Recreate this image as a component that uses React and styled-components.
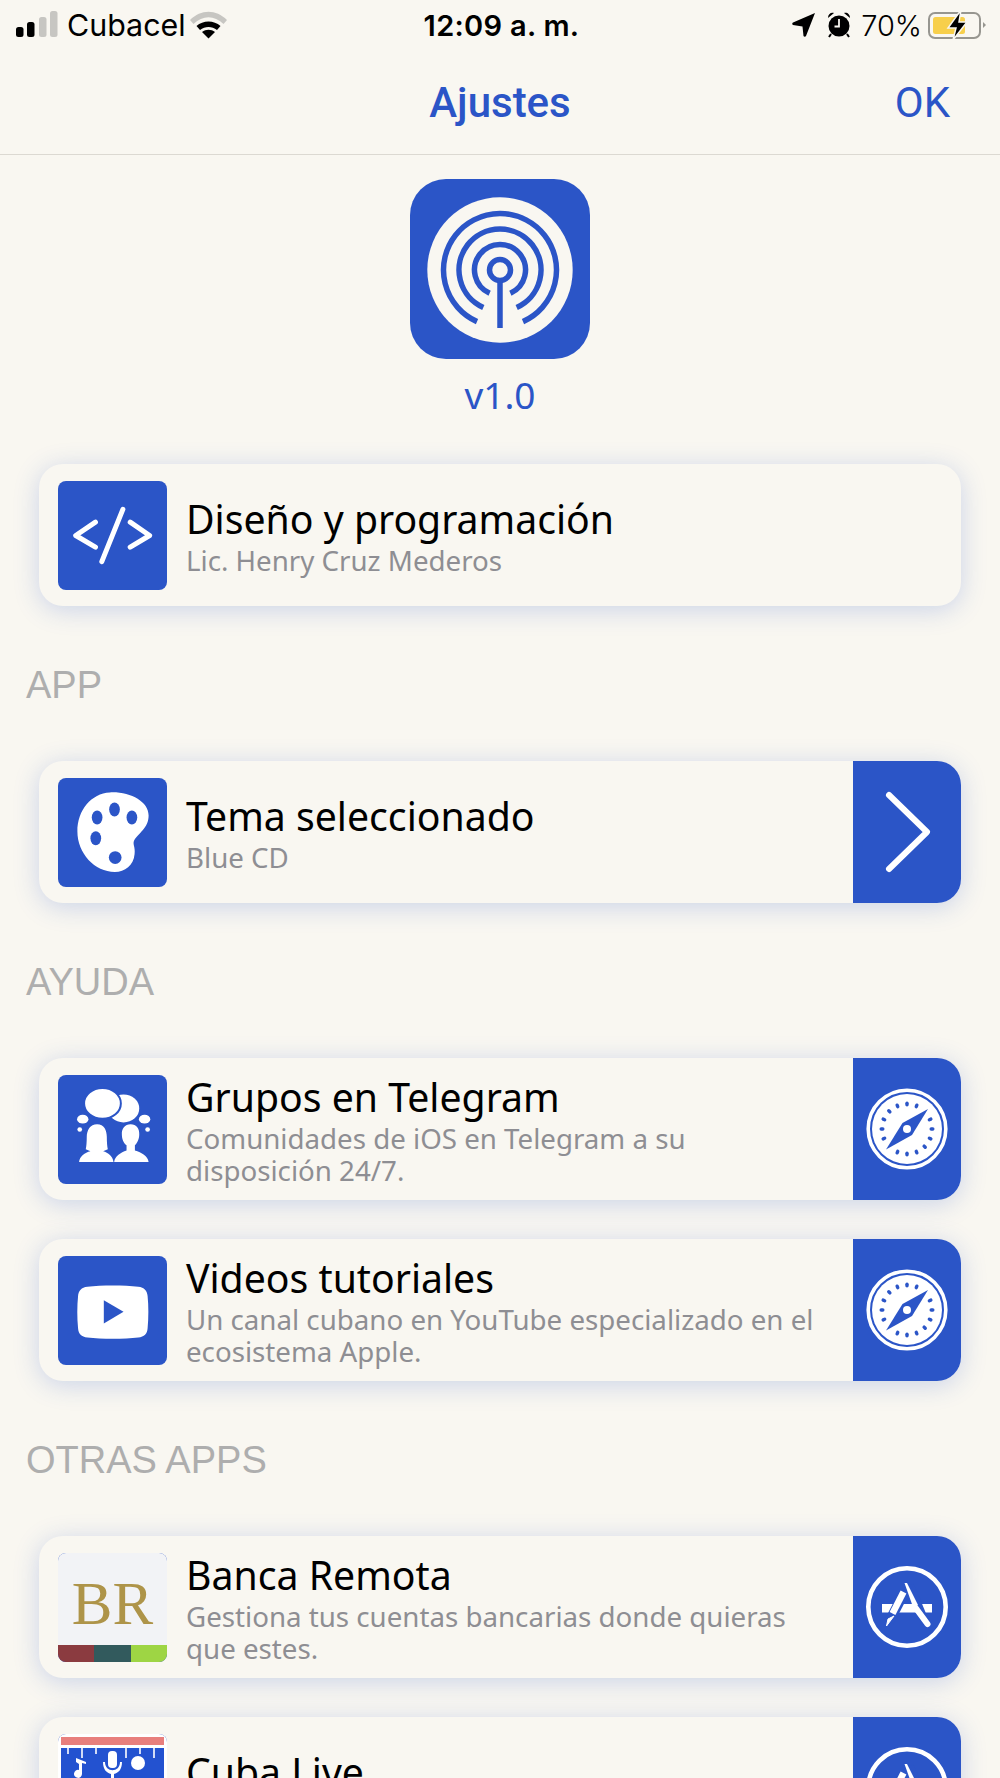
import React from 'react';
import styled, { createGlobalStyle } from 'styled-components';

const BLUE = '#2b55c7';
const BG = '#f9f7f1';

const Global = createGlobalStyle`
  html, body { margin: 0; padding: 0; background: ${BG}; }
  * { box-sizing: border-box; }
`;

const Page = styled.div`
  width: 1000px;
  height: 1778px;
  overflow: hidden;
  background: ${BG};
  font-family: 'Noto Sans', sans-serif;
`;

const StatusBar = styled.div`
  height: 50px;
  display: grid;
  grid-template-columns: 1fr auto 1fr;
  align-items: center;
  padding: 0 13px 0 16px;
  color: #000;
  font-family: Inter, sans-serif;
  font-size: 29px;
`;

const StatusGroup = styled.div`
  display: flex;
  align-items: center;
  justify-content: ${p => (p.$end ? 'flex-end' : 'flex-start')};
`;

const Carrier = styled.span`
  margin: 0 4px 0 9px;
  font-size: 30.4px;
`;

const Clock = styled.span`
  font-weight: 600;
  font-size: 29px;
  letter-spacing: 0.3px;
`;

const Percent = styled.span`
  margin: 0 6px 0 10px;
  font-weight: 300;
`;

const Glyph = styled.svg`
  display: block;
  flex: none;
  margin-left: ${p => p.$ml || 0}px;
`;

const NavBar = styled.div`
  height: 105px;
  display: grid;
  grid-template-columns: 1fr auto 1fr;
  align-items: center;
  padding: 0 50px;
  border-bottom: 1.5px solid #dcd9d2;
  color: ${BLUE};
  font-family: Roboto, sans-serif;
  font-size: 42px;
`;

const NavTitle = styled.div`
  font-weight: 500;
`;

const NavAction = styled.div`
  justify-self: end;
`;

const Header = styled.div`
  display: flex;
  flex-direction: column;
  align-items: center;
  padding-top: 24px;
  height: 309px;
`;

const Logo = styled.div`
  width: 180px;
  height: 180px;
  border-radius: 36px;
  background: ${BLUE};
`;

const Version = styled.div`
  margin-top: 11px;
  color: ${BLUE};
  font-size: 37px;
  line-height: 50px;
`;

const List = styled.div`
  display: flex;
  flex-direction: column;
  gap: 39px;
  padding: 0 39px;
`;

const SectionLabel = styled.div`
  height: 155px;
  display: flex;
  align-items: center;
  padding: 4px 0 0 26px;
  color: #aeaeae;
  font-family: 'Liberation Sans', sans-serif;
  font-size: 38px;
`;

const Card = styled.div`
  height: 142px;
  display: flex;
  align-items: stretch;
  border-radius: 24px;
  background: ${BG};
  box-shadow: 0 4px 26px rgba(43, 85, 199, 0.22);
  overflow: hidden;
`;

const IconTile = styled.div`
  flex: none;
  align-self: center;
  width: 109px;
  height: 109px;
  margin: 0 19px;
  border-radius: 8px;
  overflow: hidden;
  background: ${BLUE};
  display: flex;
  flex-direction: column;
`;

const CardText = styled.div`
  flex: 1;
  min-width: 0;
  display: flex;
  flex-direction: column;
  justify-content: center;
  padding-top: 2px;
`;

const Title = styled.div`
  color: #000;
  font-size: 39.2px;
  line-height: 46px;
  white-space: nowrap;
`;

const Sub = styled.div`
  margin-top: 2px;
  color: #8e8e93;
  font-size: 27.7px;
  line-height: 32px;
  white-space: pre;
`;

const Action = styled.div`
  flex: none;
  width: 108px;
  background: ${BLUE};
  display: flex;
  align-items: center;
  justify-content: center;
`;

const BrMark = styled.div`
  flex: 1;
  background: #f2f3f6;
  color: #ae9449;
  font-family: 'Liberation Serif', serif;
  font-size: 61px;
  display: flex;
  align-items: center;
  justify-content: center;
  padding-top: 10px;
`;

const BrStripes = styled.div`
  height: 17px;
  display: flex;
`;

const Stripe = styled.div`
  flex: 1;
  background: ${p => p.$color};
`;

const Signal = () => (
  <Glyph width="42" height="28" viewBox="0 0 42 28">
    <rect x="0" y="16" width="7.5" height="10" rx="2.5" fill="#000" />
    <rect x="11" y="11" width="7.5" height="15" rx="2.5" fill="#000" />
    <rect x="23" y="6" width="7.5" height="20" rx="2.5" fill="#c7c6c2" />
    <rect x="34" y="0" width="7.5" height="26" rx="2.5" fill="#c7c6c2" />
  </Glyph>
);

const Wifi = () => (
  <Glyph width="37" height="28" viewBox="0 0 37 28">
    <path d="M0 9 C11 -2 26 -2 37 9 L33.5 13 C24 4 13 4 3.5 13 Z" fill="#c7c6c2" />
    <path d="M6.5 15 C13 9 24 9 30.5 15 L27 19 C22 15 15 15 10 19 Z" fill="#000" />
    <path d="M12 21 C16 18 21 18 25 21 L18.5 27.5 Z" fill="#000" />
  </Glyph>
);

const Location = () => (
  <Glyph width="23" height="24" viewBox="0 0 23 24">
    <path d="M23 0 L14 23 C13.5 24 12 24 11.5 23 L10.5 13.5 L1 12 C0 11.5 0 10 1 9.5 Z" fill="#000" />
  </Glyph>
);

const Alarm = () => (
  <Glyph $ml={12} width="24" height="26" viewBox="0 0 24 26">
    <circle cx="12" cy="14" r="10.5" fill="#000" />
    <path d="M1 6 C1 2 4 0 7 1 Z M23 6 C23 2 20 0 17 1 Z" fill="#000" />
    <path d="M4 22 L2 25 M20 22 L22 25" stroke="#000" strokeWidth="2" />
    <path d="M12 7 V14.5 H7.5" stroke={BG} strokeWidth="1.8" fill="none" />
  </Glyph>
);

const Battery = () => (
  <Glyph width="59" height="30" viewBox="0 0 59 30">
    <rect x="1" y="3" width="51" height="25" rx="6" fill="none" stroke="#979690" strokeWidth="2" />
    <rect x="5" y="7" width="32" height="17" rx="2.5" fill="#f7cf4b" />
    <path d="M55 12 L58 15 L55 18 Z" fill="#979690" />
    <path d="M33 0 L20 18 H28 L25 30 L39 12 H31 Z" fill="#000" stroke={BG} strokeWidth="1.5" />
  </Glyph>
);

// ring end points sit 24 degrees either side of straight down
const arc = r => {
  const x = (r * Math.sin((24 * Math.PI) / 180)).toFixed(2);
  const y = (r * Math.cos((24 * Math.PI) / 180)).toFixed(2);
  return `M${-x} ${y} A${r} ${r} 0 1 1 ${x} ${y}`;
};

const Antenna = () => (
  <Glyph width="180" height="180" viewBox="-90 -91 180 180">
    <circle cx="0" cy="0" r="72.7" fill={BG} />
    <g fill="none" stroke={BLUE} strokeWidth="5.5">
      <path d={arc(56.5)} />
      <path d={arc(41)} />
      <path d={arc(25.5)} />
      <circle cx="0" cy="0" r="10.5" />
      <path d="M0 11 V58" />
    </g>
  </Glyph>
);

const CodeIcon = () => (
  <Glyph width="109" height="109" viewBox="0 0 326 326">
    <g fill="none" stroke="#fff" strokeWidth="15" strokeLinecap="round" strokeLinejoin="round">
      <path d="M112 123 L53 163 L112 198" />
      <path d="M194 85 L131 241" />
      <path d="M216 123 L274 163 L216 198" />
    </g>
  </Glyph>
);

const PaletteIcon = () => (
  <Glyph width="109" height="109" viewBox="0 0 326 326">
    <path
      d="M155 43 C215 40 271 70 271 112 C271 150 240 165 228 186 C222 198 232 205 229 228 C226 262 200 281 170 281 C110 281 58 225 58 160 C58 95 100 46 155 43 Z"
      fill="#fff"
    />
    <g fill={BLUE}>
      <ellipse cx="117" cy="118" rx="16" ry="21" />
      <ellipse cx="169" cy="94" rx="16" ry="21" />
      <ellipse cx="221" cy="118" rx="16" ry="21" />
      <ellipse cx="113" cy="180" rx="16" ry="21" />
      <ellipse cx="171" cy="238" rx="19" ry="19" />
    </g>
  </Glyph>
);

const GroupIcon = () => (
  <Glyph width="109" height="109" viewBox="0 0 326 326">
    <g fill="#fff">
      <ellipse cx="196" cy="100" rx="47" ry="42" />
      <ellipse cx="133" cy="85" rx="55" ry="46" stroke={BLUE} strokeWidth="6" />
      <ellipse cx="74" cy="132" rx="17" ry="13" />
      <ellipse cx="259" cy="132" rx="17" ry="13" />
      <circle cx="65" cy="163" r="7" />
      <circle cx="268" cy="163" r="7" />
      <path d="M117 147 C138 147 146 165 146 185 C146 200 147 215 149 222 L135 228 C150 232 164 243 166 260 H63 C65 243 80 232 97 228 L83 222 C85 215 86 200 86 185 C86 165 96 147 117 147 Z" />
      <path d="M217 147 C235 147 244 160 243 178 C243 192 236 205 230 210 V226 C250 232 269 243 271 260 H168 C170 243 188 232 205 226 V210 C197 205 191 192 191 178 C190 160 200 147 217 147 Z" />
    </g>
  </Glyph>
);

const YoutubeIcon = () => (
  <Glyph width="109" height="109" viewBox="0 0 326 326">
    <path
      d="M88 92 C130 87 198 87 240 92 C258 94 267 104 268 120 C271 150 271 186 268 216 C267 232 258 242 240 244 C198 249 130 249 88 244 C70 242 61 232 60 216 C57 186 57 150 60 120 C61 104 70 94 88 92 Z"
      fill="#fff"
    />
    <path d="M137 132 L196 167 L137 202 Z" fill={BLUE} />
  </Glyph>
);

const Compass = () => {
  const ticks = [];
  for (let i = 0; i < 16; i++) {
    // the needle covers the ticks at NE and SW
    if (i === 2 || i === 10) continue;
    ticks.push(<rect key={i} x="-1.7" y="-27.5" width="3.4" height="5" rx="1.7" fill={BLUE} transform={`rotate(${i * 22.5})`} />);
  }
  return (
    <Glyph width="84" height="84" viewBox="-42 -42 84 84">
      <circle cx="0" cy="0" r="38.8" fill="none" stroke="#fff" strokeWidth="3.6" />
      <circle cx="0" cy="0" r="35" fill="#fff" />
      {ticks}
      <path d="M21 -20 L5 6 L-21 20.5 L-4.5 -6 Z" fill={BLUE} />
      <circle cx="0" cy="0" r="4" fill="#fff" />
    </Glyph>
  );
};

const AppStore = () => (
  <Glyph width="84" height="84" viewBox="-42 -42 84 84">
    <circle cx="0" cy="0" r="38.7" fill="none" stroke="#fff" strokeWidth="4.6" />
    <rect x="-25" y="-3" width="50" height="8.5" fill="#fff" />
    <path d="M-3 -14 L-18 15" stroke={BLUE} strokeWidth="10" />
    <path d="M3 -22 L19 17" stroke={BLUE} strokeWidth="8" />
    <path d="M-3.5 -15 L-14.5 6.5" stroke="#fff" strokeWidth="6.5" />
    <path d="M-19 12 L-13 9 L-20.5 19 Z" fill="#fff" stroke="#fff" />
    <path d="M-2.5 -24 L0 -24 L11 -2 L6 0 Z" fill="#fff" />
    <path d="M8 0 L20.5 17" stroke="#fff" strokeWidth="6" strokeLinecap="round" />
  </Glyph>
);

const Chevron = () => (
  <Glyph width="108" height="142" viewBox="0 0 108 142">
    <path d="M36 34 L74 71 L36 108" fill="none" stroke="#fff" strokeWidth="6" strokeLinecap="round" strokeLinejoin="round" />
  </Glyph>
);

const CubaLive = () => (
  <Glyph width="109" height="109" viewBox="0 0 109 109">
    <rect width="109" height="109" fill="#fff" />
    <rect x="3" y="3" width="103" height="8" fill="#e87f7d" />
    <rect x="3" y="14" width="103" height="92" fill="#2352d0" />
    <g stroke="#fff" strokeWidth="1.6">
      <path d="M10 14 V20 M24 14 V24 M38 14 V20 M68 14 V24 M82 14 V20 M96 14 V24" />
    </g>
    <g fill="#fff">
      <path d="M18 24 L28 28 V30 L24 29 V40 A4 4 0 1 1 21 36 V30 L18 28 Z" />
      <rect x="50" y="17" width="9" height="17" rx="4" />
      <path d="M45 28 H47 C47 39 62 39 62 28 H64 C64 36 60 39 56 40 V44 H53 V40 C49 39 45 36 45 28 Z" />
      <circle cx="80" cy="29" r="7" />
      <path d="M54 47 L48 56 H60 Z" />
    </g>
  </Glyph>
);

const Row = ({ icon, title, sub, action }) => (
  <Card>
    <IconTile>{icon}</IconTile>
    <CardText>
      <Title>{title}</Title>
      <Sub>{sub}</Sub>
    </CardText>
    {action && <Action>{action}</Action>}
  </Card>
);

export default function App() {
  return (
    <Page>
      <Global />
      <StatusBar>
        <StatusGroup>
          <Signal />
          <Carrier>Cubacel</Carrier>
          <Wifi />
        </StatusGroup>
        <Clock>12:09 a. m.</Clock>
        <StatusGroup $end>
          <Location />
          <Alarm />
          <Percent>70%</Percent>
          <Battery />
        </StatusGroup>
      </StatusBar>
      <NavBar>
        <span />
        <NavTitle>Ajustes</NavTitle>
        <NavAction>OK</NavAction>
      </NavBar>
      <Header>
        <Logo>
          <Antenna />
        </Logo>
        <Version>v1.0</Version>
      </Header>
      <List>
        <Row icon={<CodeIcon />} title="Diseño y programación" sub="Lic. Henry Cruz Mederos" />
      </List>
      <SectionLabel>APP</SectionLabel>
      <List>
        <Row icon={<PaletteIcon />} title="Tema seleccionado" sub="Blue CD" action={<Chevron />} />
      </List>
      <SectionLabel>AYUDA</SectionLabel>
      <List>
        <Row
          icon={<GroupIcon />}
          title="Grupos en Telegram"
          sub={'Comunidades de iOS en Telegram a su\ndisposición 24/7.'}
          action={<Compass />}
        />
        <Row
          icon={<YoutubeIcon />}
          title="Videos tutoriales"
          sub={'Un canal cubano en YouTube especializado en el\necosistema Apple.'}
          action={<Compass />}
        />
      </List>
      <SectionLabel>OTRAS APPS</SectionLabel>
      <List>
        <Row
          icon={
            <>
              <BrMark>BR</BrMark>
              <BrStripes>
                <Stripe $color="#8b3b40" />
                <Stripe $color="#325a5d" />
                <Stripe $color="#9ed544" />
              </BrStripes>
            </>
          }
          title="Banca Remota"
          sub={'Gestiona tus cuentas bancarias donde quieras\nque estes.'}
          action={<AppStore />}
        />
        <Row icon={<CubaLive />} title="Cuba Live" sub={'\u00a0'} action={<AppStore />} />
      </List>
    </Page>
  );
}
